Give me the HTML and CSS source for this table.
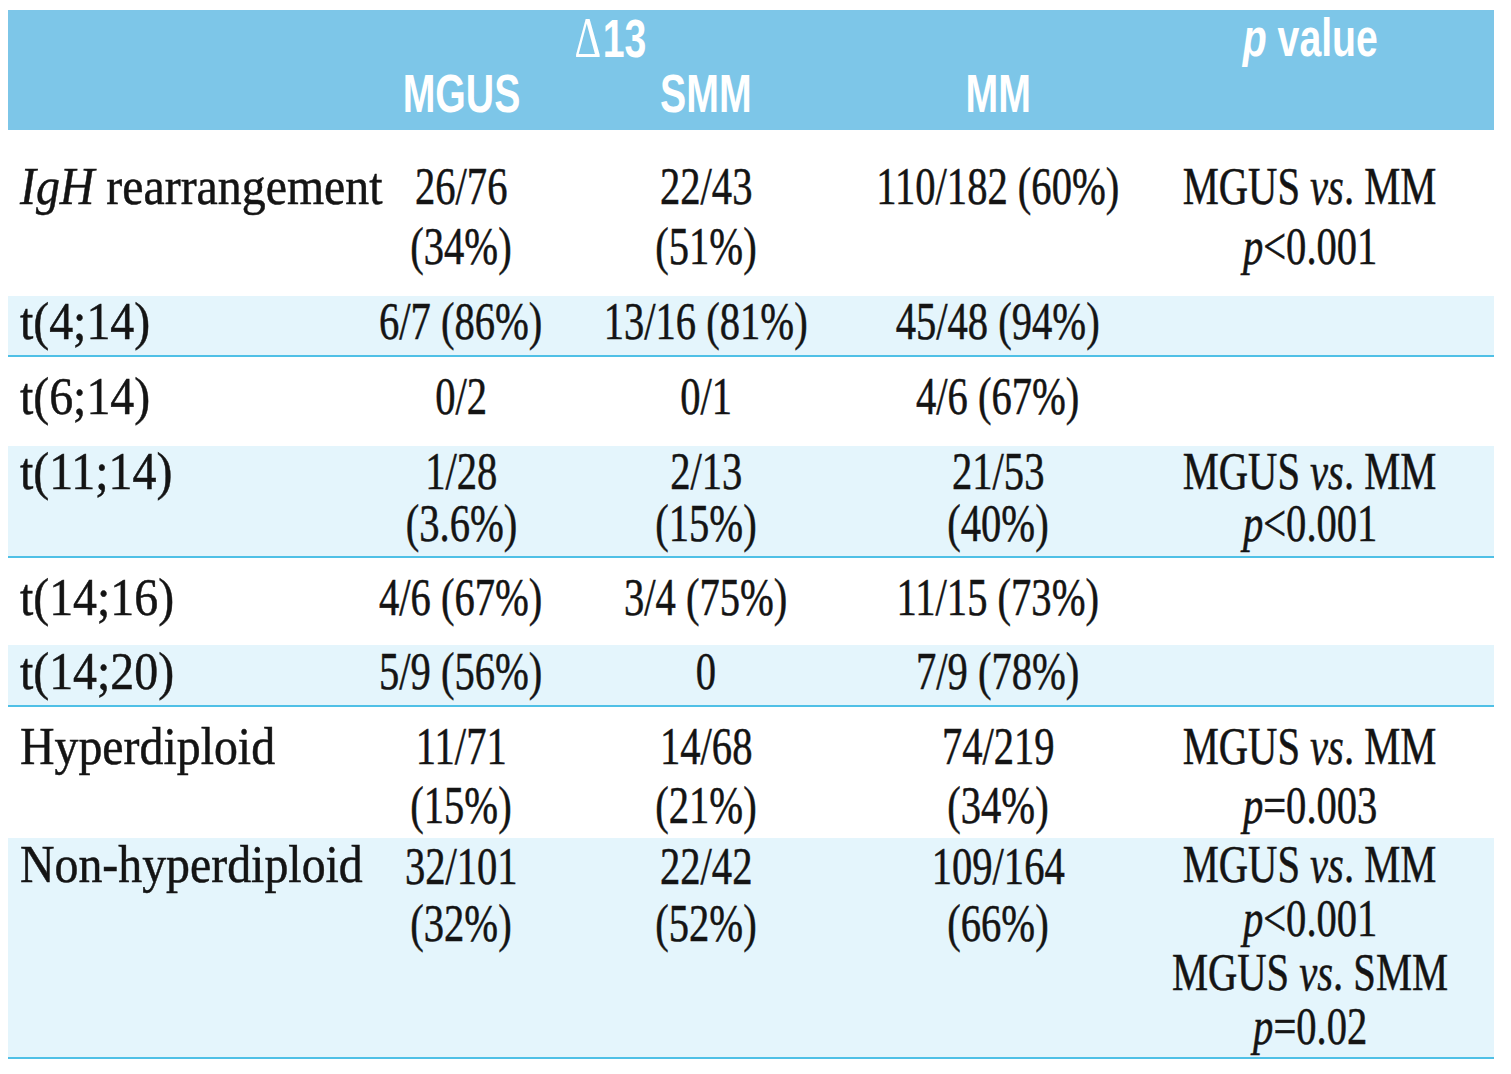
FILE: index.html
```html
<!DOCTYPE html>
<html lang="en">
<head>
<meta charset="utf-8">
<title>Δ13 table</title>
<link rel="stylesheet" href="styles.css">
</head>
<body>
<div class="table">
  <div class="head">
    <div class="h-delta"><span class="hx"><span class="tri">Δ</span>13</span></div>
    <div class="h-p"><span class="hx"><i>p</i> value</span></div>
    <div class="h-c2"><span class="hx">MGUS</span></div>
    <div class="h-c3"><span class="hx">SMM</span></div>
    <div class="h-c4"><span class="hx">MM</span></div>
  </div>

  <div class="row r-igh">
    <div class="label"><i>IgH</i> rearrangement</div>
    <div class="cell"><span>26/76</span><span>(34%)</span></div>
    <div class="cell"><span>22/43</span><span>(51%)</span></div>
    <div class="cell"><span>110/182 (60%)</span></div>
    <div class="cell pv"><span>MGUS <i>vs</i>. MM</span><span><i>p</i>&lt;0.001</span></div>
  </div>

  <div class="row shade r-t4">
    <div class="label">t(4;14)</div>
    <div class="cell"><span>6/7 (86%)</span></div>
    <div class="cell"><span>13/16 (81%)</span></div>
    <div class="cell"><span>45/48 (94%)</span></div>
    <div class="cell pv"></div>
  </div>

  <div class="row r-t6">
    <div class="label">t(6;14)</div>
    <div class="cell"><span>0/2</span></div>
    <div class="cell"><span>0/1</span></div>
    <div class="cell"><span>4/6 (67%)</span></div>
    <div class="cell pv"></div>
  </div>

  <div class="row shade r-t11">
    <div class="label">t(11;14)</div>
    <div class="cell"><span>1/28</span><span>(3.6%)</span></div>
    <div class="cell"><span>2/13</span><span>(15%)</span></div>
    <div class="cell"><span>21/53</span><span>(40%)</span></div>
    <div class="cell pv"><span>MGUS <i>vs</i>. MM</span><span><i>p</i>&lt;0.001</span></div>
  </div>

  <div class="row r-t16">
    <div class="label">t(14;16)</div>
    <div class="cell"><span>4/6 (67%)</span></div>
    <div class="cell"><span>3/4 (75%)</span></div>
    <div class="cell"><span>11/15 (73%)</span></div>
    <div class="cell pv"></div>
  </div>

  <div class="row shade r-t20">
    <div class="label">t(14;20)</div>
    <div class="cell"><span>5/9 (56%)</span></div>
    <div class="cell"><span>0</span></div>
    <div class="cell"><span>7/9 (78%)</span></div>
    <div class="cell pv"></div>
  </div>

  <div class="row r-hyper">
    <div class="label">Hyperdiploid</div>
    <div class="cell"><span>11/71</span><span>(15%)</span></div>
    <div class="cell"><span>14/68</span><span>(21%)</span></div>
    <div class="cell"><span>74/219</span><span>(34%)</span></div>
    <div class="cell pv"><span>MGUS <i>vs</i>. MM</span><span><i>p</i>=0.003</span></div>
  </div>

  <div class="row shade r-non">
    <div class="label">Non-hyperdiploid</div>
    <div class="cell num"><span>32/101</span><span>(32%)</span></div>
    <div class="cell num"><span>22/42</span><span>(52%)</span></div>
    <div class="cell num"><span>109/164</span><span>(66%)</span></div>
    <div class="cell pv"><span>MGUS <i>vs</i>. MM</span><span><i>p</i>&lt;0.001</span><span>MGUS <i>vs</i>. SMM</span><span><i>p</i>=0.02</span></div>
  </div>
</div>
</body>
</html>
```

FILE: styles.css
```css
html, body {
  margin: 0;
  padding: 0;
  background: #ffffff;
}

body {
  font-family: "Liberation Serif", "Times New Roman", serif;
  color: #141414;
}

.table {
  width: 1486px;
  margin: 10px 0 0 8px;
}

/* ---------- header band ---------- */
.head {
  background: #7dc6e8;
  display: grid;
  grid-template-columns: 357px 192px 298px 286px 338px;
  grid-template-rows: 56px 56px;
  padding-bottom: 8px;
  color: #ffffff;
  font-family: "Liberation Sans", Arial, sans-serif;
  font-weight: bold;
  font-size: 53px;
  line-height: 56px;
}

.head > div {
  display: flex;
  justify-content: center;
  white-space: nowrap;
}

.hx {
  display: block;
  transform: scaleX(0.74);
}

.tri {
  font-family: "Liberation Serif", "Times New Roman", serif;
  font-weight: normal;
  font-size: 56px;
  padding-right: 2px;
}

.h-delta { grid-column: 2 / 4; grid-row: 1; }
.h-p     { grid-column: 5; grid-row: 1; }
.h-c2    { grid-column: 2; grid-row: 2; }
.h-c3    { grid-column: 3; grid-row: 2; }
.h-c4    { grid-column: 4; grid-row: 2; }

/* ---------- body rows ---------- */
.row {
  display: grid;
  grid-template-columns: 357px 192px 298px 286px 338px;
  align-items: start;
  font-size: 52px;
  line-height: 56px;
  -webkit-text-stroke: 0.5px #141414;
}

.row.shade {
  background: #e4f5fc;
  border-bottom: 2px solid #4fc0e6;
}

.label {
  padding-left: 13px;
  white-space: nowrap;
  transform: scaleX(0.92);
  transform-origin: 0 0;
}

.cell {
  display: flex;
  flex-direction: column;
  align-items: center;
  white-space: nowrap;
}

.cell > span {
  display: block;
  transform: scaleX(0.78);
}

.cell.pv > span {
  transform: scaleX(0.78);
}

/* per-row vertical rhythm */
.r-igh   { line-height: 60px; padding: 27px 0 19px; }
.r-t4    { line-height: 52px; padding: 0 0 7px; }
.r-t6    { line-height: 56px; padding: 12px 0 21px; }
.r-t11   { line-height: 52px; padding: 0 0 6px; }
.r-t16   { line-height: 56px; padding: 12px 0 19px; }
.r-t20   { line-height: 52px; padding: 1px 0 7px; }
.r-hyper { line-height: 59px; padding: 10px 0 3px; }
.r-non   { line-height: 54px; padding: 0 0 3px; }
.r-non .num { line-height: 57px; }
```
